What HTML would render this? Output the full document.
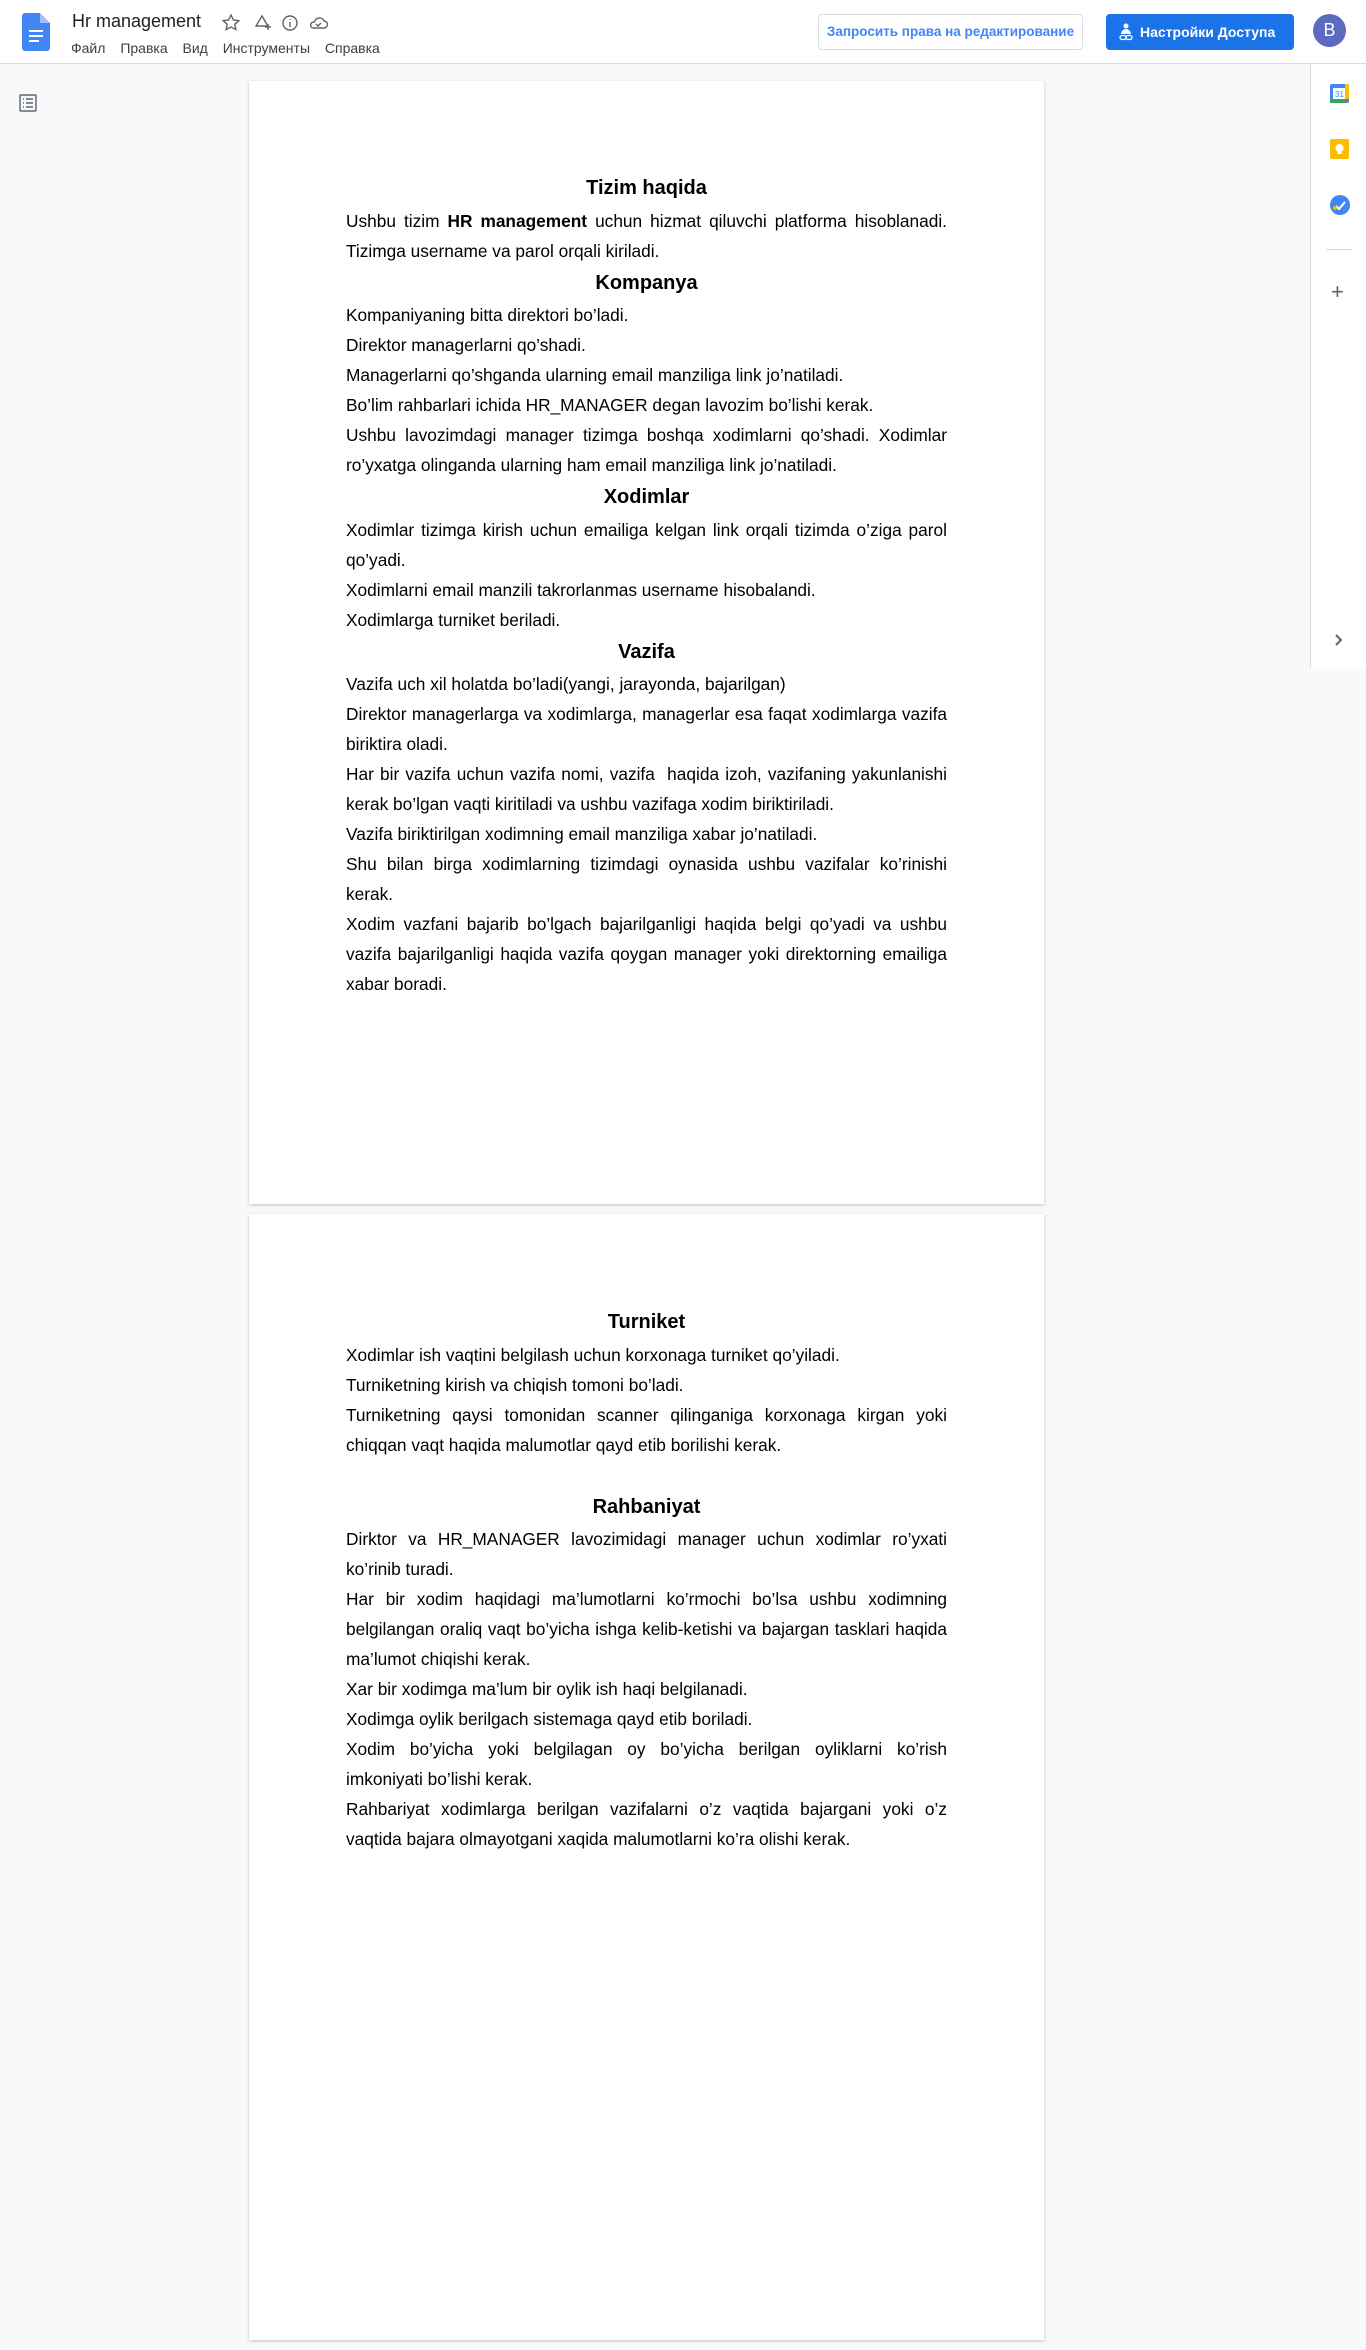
<!DOCTYPE html>
<html><head><meta charset="utf-8"><style>
*{box-sizing:border-box;margin:0;padding:0}
body{width:1366px;height:2350px;background:#f8f9fa;font-family:"Liberation Sans",Arial,sans-serif;position:relative;overflow:hidden}
.hdr{position:absolute;left:0;top:0;width:1366px;height:64px;background:#fff;border-bottom:1px solid #dadce0}
.title{position:absolute;left:72px;top:11px;font-size:18px;color:#202124}
.menu{position:absolute;left:71px;top:40px;font-size:14px;color:#3c4043;word-spacing:0}
.menu span{margin-right:11px}
.btn1{position:absolute;left:818px;top:14px;width:265px;height:36px;border:1px solid #dadce0;border-radius:4px;color:#4285f4;font-size:13.5px;font-weight:bold;line-height:34px;text-align:center}
.btn2{position:absolute;left:1106px;top:14px;width:188px;height:36px;background:#1a73e8;border-radius:4px;color:#fff;font-size:14px;font-weight:bold;line-height:36px;padding-left:34px}
.av{position:absolute;left:1313px;top:14px;width:33px;height:33px;border-radius:50%;background:#5c6bc0;color:#fff;font-size:18px;text-align:center;line-height:33px}
.side{position:absolute;left:1310px;top:64px;width:56px;height:604px;background:#fff;border-left:1px solid #dadce0}
.page{position:absolute;left:249px;width:795px;background:#fff;box-shadow:0 1px 3px rgba(60,64,67,.3)}
.c{position:absolute;left:97px;width:601px;color:#000;font-size:17.3px}
.c h2{font-size:20px;font-weight:bold;text-align:center;line-height:34.5px}
.c div{line-height:30px;white-space:nowrap}
.c .j{text-align:justify;text-align-last:justify;white-space:normal}
</style></head><body>
<div class="hdr">
<svg style="position:absolute;left:22px;top:13px" width="28" height="38" viewBox="0 0 28 38"><path d="M3 0h15l10 10v25a3 3 0 0 1-3 3H3a3 3 0 0 1-3-3V3a3 3 0 0 1 3-3z" fill="#4285f4"/><path d="M18 0v10h10z" fill="#a1c2fa"/><rect x="7" y="17" width="14" height="2" fill="#fff"/><rect x="7" y="22" width="14" height="2" fill="#fff"/><rect x="7" y="27" width="10" height="2" fill="#fff"/></svg>
<div class="title">Hr management</div>
<svg style="position:absolute;left:221px;top:13px" width="110" height="20" viewBox="0 0 110 20" fill="none" stroke="#5f6368" stroke-width="1.4"><path d="M10 2l2.4 5 5.4.6-4 3.7 1.1 5.3L10 14l-4.9 2.6 1.1-5.3-4-3.7 5.4-.6z"/><path d="M41 3l6 10h-12z M44 14h6 M47 11v6"/><circle cx="69" cy="10" r="7"/><path d="M69 9v5 M69 6v1"/><path d="M92 15h11a3.5 3.5 0 0 0 0-7 5 5 0 0 0-9.5 1A3 3 0 0 0 92 15z M95 11l2 2 3-3"/></svg>
<div class="menu"><span>Файл</span> <span>Правка</span> <span>Вид</span> <span>Инструменты</span> <span>Справка</span></div>
<div class="btn1">Запросить права на редактирование</div>
<div class="btn2"><svg style="position:absolute;left:12px;top:9px" width="16" height="18" viewBox="0 0 16 18" fill="#fff"><circle cx="8" cy="3" r="2.5"/><path d="M3 11a5 5 0 0 1 10 0z"/><rect x="2" y="12.5" width="6" height="4" rx="2" fill="none" stroke="#fff" stroke-width="1.3"/><rect x="8" y="12.5" width="6" height="4" rx="2" fill="none" stroke="#fff" stroke-width="1.3"/></svg>Настройки Доступа</div>
<div class="av">B</div>
</div>
<svg style="position:absolute;left:19px;top:94px" width="18" height="18" viewBox="0 0 18 18" fill="none" stroke="#5f6368" stroke-width="1.4"><rect x="1" y="1" width="16" height="16" rx="1"/><path d="M4 5h1M7 5h7M4 9h1M7 9h7M4 13h1M7 13h7"/></svg>
<div class="side">
<svg style="position:absolute;left:19px;top:20px" width="19" height="19" viewBox="0 0 19 19"><rect x="0" y="0" width="19" height="19" rx="2" fill="#4285f4"/><rect x="3" y="4" width="13" height="11" fill="#fff"/><rect x="0" y="15" width="15" height="4" fill="#34a853"/><rect x="15" y="0" width="4" height="15" fill="#fbbc04"/><path d="M15 15h4l-4 4z" fill="#ea4335"/><text x="9.5" y="13" font-size="8" text-anchor="middle" fill="#4285f4" font-family="Liberation Sans">31</text></svg>
<svg style="position:absolute;left:19px;top:75px" width="19" height="20" viewBox="0 0 19 20"><rect width="19" height="20" rx="2" fill="#fbbc04"/><circle cx="9.5" cy="9" r="4" fill="#fff"/><rect x="7.5" y="12" width="4" height="3" fill="#fff"/></svg>
<svg style="position:absolute;left:19px;top:131px" width="20" height="20" viewBox="0 0 20 20"><circle cx="10" cy="10" r="10" fill="#4285f4"/><path d="M6 11l3 3 6-7" stroke="#fff" stroke-width="2" fill="none"/><circle cx="5" cy="13" r="2" fill="#fbbc04"/></svg>
<div style="position:absolute;left:15px;top:185px;width:27px;height:1px;background:#dadce0"></div>
<div style="position:absolute;left:20px;top:215px;font-size:22px;color:#5f6368">+</div>
<svg style="position:absolute;left:23px;top:569px" width="10" height="14" viewBox="0 0 10 14" fill="none" stroke="#5f6368" stroke-width="2"><path d="M2 2l5 5-5 5"/></svg>
</div>

<div class="page" style="top:81px;height:1123px">
<div class="c" style="top:90px">
<h2>Tizim haqida</h2>
<div class="j">Ushbu tizim <b>HR management</b> uchun hizmat qiluvchi platforma hisoblanadi.</div>
<div>Tizimga username va parol orqali kiriladi.</div>
<h2>Kompanya</h2>
<div>Kompaniyaning bitta direktori bo’ladi.</div>
<div>Direktor managerlarni qo’shadi.</div>
<div>Managerlarni qo’shganda ularning email manziliga link jo’natiladi.</div>
<div>Bo’lim rahbarlari ichida HR_MANAGER degan lavozim bo’lishi kerak.</div>
<div class="j">Ushbu lavozimdagi manager tizimga boshqa xodimlarni qo’shadi. Xodimlar</div>
<div>ro’yxatga olinganda ularning ham email manziliga link jo’natiladi.</div>
<h2>Xodimlar</h2>
<div class="j">Xodimlar tizimga kirish uchun emailiga kelgan link orqali tizimda o’ziga parol</div>
<div>qo’yadi.</div>
<div>Xodimlarni email manzili takrorlanmas username hisobalandi.</div>
<div>Xodimlarga turniket beriladi.</div>
<h2>Vazifa</h2>
<div>Vazifa uch xil holatda bo’ladi(yangi, jarayonda, bajarilgan)</div>
<div class="j">Direktor managerlarga va xodimlarga, managerlar esa faqat xodimlarga vazifa</div>
<div>biriktira oladi.</div>
<div class="j">Har bir vazifa uchun vazifa nomi, vazifa &nbsp;haqida izoh, vazifaning yakunlanishi</div>
<div>kerak bo’lgan vaqti kiritiladi va ushbu vazifaga xodim biriktiriladi.</div>
<div>Vazifa biriktirilgan xodimning email manziliga xabar jo’natiladi.</div>
<div class="j">Shu bilan birga xodimlarning tizimdagi oynasida ushbu vazifalar ko’rinishi</div>
<div>kerak.</div>
<div class="j">Xodim vazfani bajarib bo’lgach bajarilganligi haqida belgi qo’yadi va ushbu</div>
<div class="j">vazifa bajarilganligi haqida vazifa qoygan manager yoki direktorning emailiga</div>
<div>xabar boradi.</div>
</div></div>

<div class="page" style="top:1214px;height:1126px">
<div class="c" style="top:91px">
<h2>Turniket</h2>
<div>Xodimlar ish vaqtini belgilash uchun korxonaga turniket qo’yiladi.</div>
<div>Turniketning kirish va chiqish tomoni bo’ladi.</div>
<div class="j">Turniketning qaysi tomonidan scanner qilinganiga korxonaga kirgan yoki</div>
<div>chiqqan vaqt haqida malumotlar qayd etib borilishi kerak.</div>
<div>&nbsp;</div>
<h2>Rahbaniyat</h2>
<div class="j">Dirktor va HR_MANAGER lavozimidagi manager uchun xodimlar ro’yxati</div>
<div>ko’rinib turadi.</div>
<div class="j">Har bir xodim haqidagi ma’lumotlarni ko’rmochi bo’lsa ushbu xodimning</div>
<div class="j">belgilangan oraliq vaqt bo’yicha ishga kelib-ketishi va bajargan tasklari haqida</div>
<div>ma’lumot chiqishi kerak.</div>
<div>Xar bir xodimga ma’lum bir oylik ish haqi belgilanadi.</div>
<div>Xodimga oylik berilgach sistemaga qayd etib boriladi.</div>
<div class="j">Xodim bo’yicha yoki belgilagan oy bo’yicha berilgan oyliklarni ko’rish</div>
<div>imkoniyati bo’lishi kerak.</div>
<div class="j">Rahbariyat xodimlarga berilgan vazifalarni o’z vaqtida bajargani yoki o’z</div>
<div>vaqtida bajara olmayotgani xaqida malumotlarni ko’ra olishi kerak.</div>
</div></div>
</body></html>
